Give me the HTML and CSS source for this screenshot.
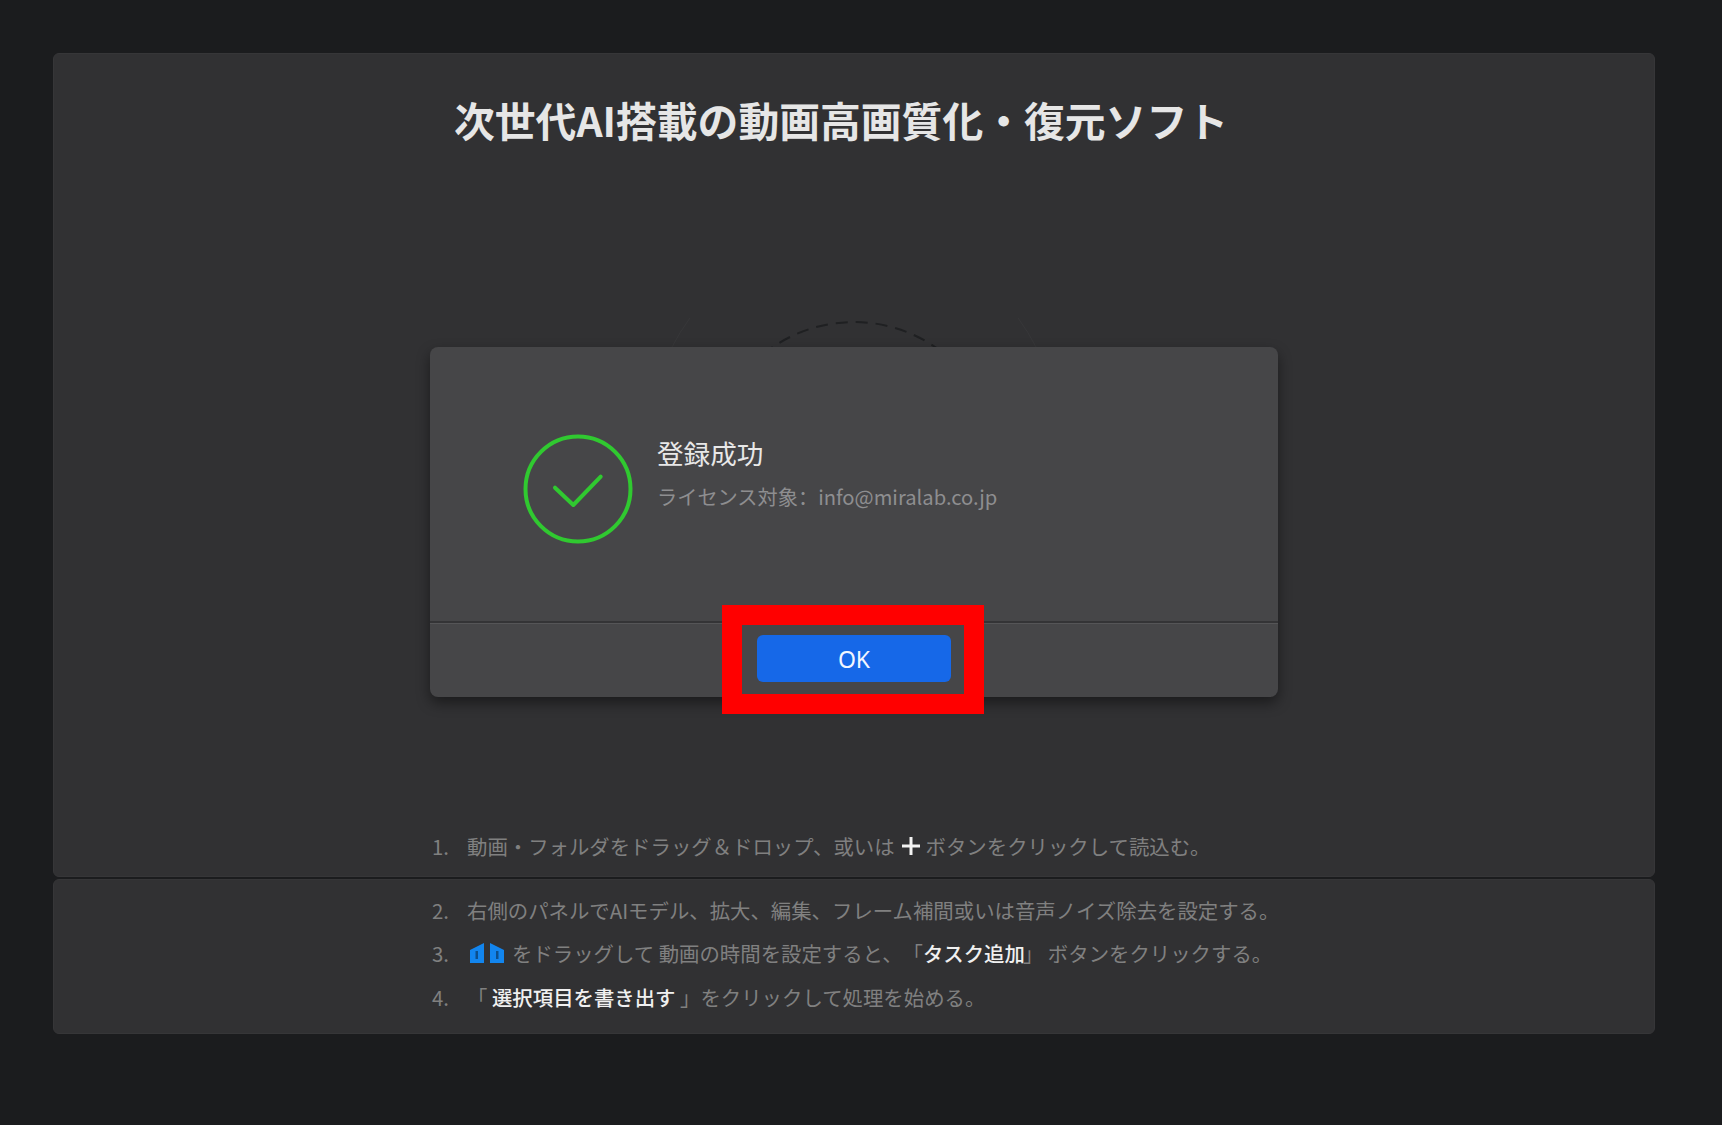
FILE: index.html
```html
<!DOCTYPE html>
<html lang="ja">
<head>
<meta charset="utf-8">
<title>登録成功</title>
<link rel="stylesheet" href="styles.css">
</head>
<body>
<main class="page">
  <section class="panel panel-main">
    <h1 class="title">次世代AI搭載の動画高画質化・復元ソフト</h1>
    <div class="drop-zone">
      <svg class="drop-ring" width="400" height="60" viewBox="0 0 400 60" aria-hidden="true">
        <circle cx="200" cy="166" r="144" fill="none" stroke="#1f2022" stroke-width="2" stroke-dasharray="12 8"/>
        <path d="M18 47A204 204 0 0 1 36 18M382 47A204 204 0 0 0 364 18" fill="none" stroke="#373739" stroke-width="1"/>
      </svg>
    </div>
    <div class="steps steps-first">
      <p class="step"><span class="num">1.</span><span>動画・フォルダをドラッグ＆ドロップ、或いは</span>
        <svg class="plus" width="20" height="20" viewBox="0 0 20 20" aria-hidden="true"><path d="M10 1v18M1 10h18" stroke="#f2f2f2" stroke-width="3"/></svg>
        <span>ボタンをクリックして読込む。</span></p>
    </div>
  </section>
  <section class="panel panel-steps">
    <div class="steps">
      <p class="step"><span class="num">2.</span><span>右側のパネルでAIモデル、拡大、編集、フレーム補間或いは音声ノイズ除去を設定する。</span></p>
      <p class="step"><span class="num">3.</span>
        <svg class="handles" width="37" height="20" viewBox="0 0 37 20" aria-hidden="true">
          <path d="M1 7 15 0V20H1Z" fill="#1285ee"/><path d="M6.500 8h2.500v8H6.500Z" fill="#0c4f8c"/>
          <path d="M21 0 35 7V20H21Z" fill="#1285ee"/><path d="M27 8h2.500v8H27Z" fill="#0c4f8c"/>
        </svg>
        <span>をドラッグして 動画の時間を設定すると、「<b class="hl hl-tight">タスク追加</b>」 ボタンをクリックする。</span></p>
      <p class="step"><span class="num">4.</span><span>「 <b class="hl">選択項目を書き出す</b> 」をクリックして処理を始める。</span></p>
    </div>
  </section>
</main>

<div class="dialog">
  <div class="dialog-body">
    <svg class="ok-icon" width="110" height="110" viewBox="0 0 110 110" aria-hidden="true">
      <circle cx="55" cy="55" r="52.500" fill="none" stroke="#30c930" stroke-width="4"/>
      <path d="M32 53.700 50.300 71 77.700 42.700" fill="none" stroke="#30c930" stroke-width="4" stroke-linecap="round" stroke-linejoin="round"/>
    </svg>
    <div class="dialog-text">
      <div class="dialog-title">登録成功</div>
      <div class="dialog-sub">ライセンス対象<span class="colon" lang="zh-CN">：</span>info@miralab.co.jp</div>
    </div>
  </div>
  <div class="dialog-foot">
    <button class="ok-btn" type="button">OK</button>
  </div>
</div>
<div class="annotation"></div>
</body>
</html>
```
FILE: styles.css
```css
* { box-sizing: border-box; }
html, body { margin: 0; height: 100%; }
body {
  position: relative;
  width: 1722px;
  height: 1125px;
  overflow: hidden;
  background: #1b1c1e;
  font-family: "Noto Sans CJK JP", "Noto Sans", sans-serif;
  color: #808080;
}
.page {
  display: flex;
  flex-direction: column;
  gap: 2px;
  padding: 53px 67px 0 53px;
}
.panel {
  background: #313133;
  border: 1px solid #363638;
  border-radius: 6px;
}
.panel-main {
  display: flex;
  flex-direction: column;
  height: 824px;
}
.panel-steps {
  height: 155px;
  padding-top: 8px;
}
.title {
  margin: 0;
  padding-top: 37px;
  padding-right: 26px;
  text-align: center;
  font-size: 40.800px;
  line-height: 58px;
  font-weight: 700;
  color: #e6e6e6;
}
.drop-zone {
  flex: 1;
  display: flex;
  justify-content: center;
  padding-top: 151px;
}
.drop-ring { display: block; }
.steps {
  display: flex;
  flex-direction: column;
  padding-left: 378px;
}
.steps-first { padding-bottom: 8px; }
.step {
  display: flex;
  align-items: center;
  height: 43.500px;
  margin: 0;
  font-size: 20.400px;
  white-space: pre;
  text-spacing-trim: space-all;
}
.num { width: 35px; flex: none; }
.hl { color: #f0f0f0; font-weight: 500; }
.hl-tight { margin-right: -2px; }
.plus { margin: 0 5px 0 6px; flex: none; }
.handles { margin: 0 6px 0 2px; flex: none; }
.dialog {
  position: absolute;
  left: 430px;
  top: 347px;
  width: 848px;
  height: 350px;
  display: flex;
  flex-direction: column;
  background: #464648;
  border-radius: 8px;
  box-shadow: 0 6px 14px rgba(0, 0, 0, .45);
}
.dialog-body {
  flex: none;
  height: 276px;
  display: flex;
  align-items: flex-start;
  padding: 87px 0 0 93px;
  gap: 24px;
  border-bottom: 2px solid #343436;
  box-shadow: 0 1px 0 #555557;
}
.ok-icon { flex: none; }
.dialog-text { display: flex; flex-direction: column; padding-top: 1px; }
.dialog-title {
  font-size: 26.600px;
  line-height: 36px;
  color: #e8e8e8;
}
.dialog-sub {
  margin-top: 10px;
  font-size: 20.200px;
  line-height: 32px;
  color: #8e8e90;
}
.colon { font-family: "Noto Sans CJK SC", sans-serif; }
.dialog-foot {
  flex: 1;
  display: flex;
  justify-content: center;
  align-items: flex-start;
  padding-top: 12px;
}
.ok-btn {
  width: 194px;
  height: 47px;
  border: 0;
  border-radius: 6px;
  background: #1668e8;
  color: #f2f6ff;
  font-family: "Noto Sans", sans-serif;
  font-size: 23px;
  padding: 0;
}
.annotation {
  position: absolute;
  left: 722px;
  top: 605px;
  width: 262px;
  height: 109px;
  border: 20px solid #ff0000;
}
```
